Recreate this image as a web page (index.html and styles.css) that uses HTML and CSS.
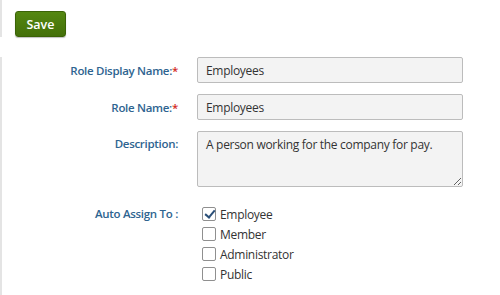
FILE: index.html
```html
<!DOCTYPE html>
<html lang="en">
<head>
    <meta charset="UTF-8">
    <meta name="viewport" content="width=device-width, initial-scale=1.0">
    <title>Edit Role</title>
    <link rel="stylesheet" href="styles.css">
</head>
<body>
    <div class="toolbar">
        <button type="button" class="btn-save">Save</button>
    </div>

    <form class="role-form">
        <label class="field-label" for="display-name">Role Display Name:<span class="req">*</span></label>
        <input type="text" id="display-name" class="field-input" value="Employees">

        <label class="field-label" for="role-name">Role Name:<span class="req">*</span></label>
        <input type="text" id="role-name" class="field-input" value="Employees">

        <label class="field-label label-top" for="description">Description:</label>
        <textarea id="description" class="field-input field-area">A person working for the company for pay.</textarea>

        <span class="field-label label-assign">Auto Assign To :</span>
        <div class="check-list">
            <label class="check-item"><input type="checkbox" checked> Employee</label>
            <label class="check-item"><input type="checkbox"> Member</label>
            <label class="check-item"><input type="checkbox"> Administrator</label>
            <label class="check-item"><input type="checkbox"> Public</label>
        </div>
    </form>
</body>
</html>
```

FILE: styles.css
```css
body {
    margin: 0;
    background-color: #fff;
    font-family: "Open Sans", "Noto Sans", Arial, sans-serif;
    font-size: 12px;
    letter-spacing: -0.3px;
    color: #333;
}
.toolbar {
    height: 37px;
    padding: 11px 0 0 13px;
    box-sizing: border-box;
    border-left: 2px solid #e4e4e4;
    margin-bottom: 20px;
}
.btn-save {
    width: 51px;
    height: 26px;
    padding: 0;
    background: linear-gradient(#548711, #44700a);
    border: 1px solid #3b6307;
    border-radius: 3px;
    color: #fff;
    font-family: inherit;
    font-size: 12.5px;
    font-weight: 600;
    letter-spacing: 0;
    box-shadow: 0 1px 1px rgba(0, 0, 0, 0.25);
}
.role-form {
    display: grid;
    grid-template-columns: 176px 266px;
    column-gap: 19px;
    row-gap: 11px;
    border-left: 2px solid #e4e4e4;
    min-height: 238px;
    align-content: start;
}
.field-label {
    justify-self: end;
    align-self: center;
    color: #2e6490;
    font-weight: 600;
    font-size: 11.5px;
}
.label-top {
    align-self: start;
    padding-top: 5px;
}
.label-assign {
    align-self: start;
    margin-top: 6px;
    padding-top: 2px;
}
.req {
    color: #d42a1e;
}
.field-input {
    height: 26px;
    box-sizing: border-box;
    padding: 0 8px;
    background-color: #f3f3f3;
    border: 1px solid #bcbcbc;
    border-radius: 2px;
    font-family: inherit;
    font-size: 12px;
    letter-spacing: -0.3px;
    color: #333;
    margin: 0;
}
.field-area {
    height: 56px;
    padding: 4px 8px;
    resize: vertical;
    line-height: 17px;
}
.check-list {
    margin-top: 6px;
    display: flex;
    flex-direction: column;
}
.check-item {
    display: flex;
    align-items: center;
    gap: 4px;
    height: 20px;
    padding-left: 5px;
    font-size: 12px;
    color: #333;
}
.check-item input {
    appearance: none;
    -webkit-appearance: none;
    width: 14px;
    height: 14px;
    margin: 0;
    border: 1px solid #8f8f8f;
    border-radius: 2px;
    background: #fff;
    position: relative;
}
.check-item input:checked::after {
    content: "";
    position: absolute;
    left: 4px;
    top: 0px;
    width: 4px;
    height: 8px;
    border: solid #2b4f78;
    border-width: 0 2px 2px 0;
    transform: rotate(40deg);
}
```
